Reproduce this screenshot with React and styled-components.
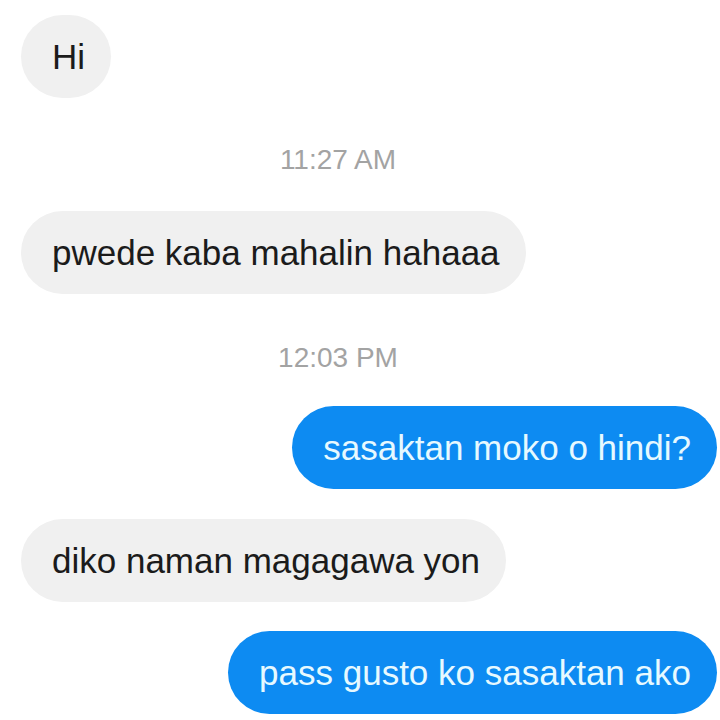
import React from "react";
import styled, { createGlobalStyle } from "styled-components";

const Global = createGlobalStyle`
  html, body { margin: 0; padding: 0; background: #ffffff; }
  body { font-family: "Liberation Sans", Arial, sans-serif; }
`;

const Thread = styled.div`
  width: 720px;
  height: 720px;
  box-sizing: border-box;
  padding: 15px 3px 0 21px;
  display: flex;
  flex-direction: column;
  overflow: hidden;
  background: #ffffff;
`;

const Row = styled.div`
  display: flex;
  justify-content: ${(p) => (p.$mine ? "flex-end" : "flex-start")};
  margin-top: ${(p) => p.$gap || 0}px;
`;

const Bubble = styled.div`
  box-sizing: border-box;
  height: 83px;
  padding: 21px 26px 21px 31px;
  border-radius: 42px;
  font-size: 35px;
  line-height: 41px;
  white-space: nowrap;
  background: ${(p) => (p.$mine ? "#0d8bf2" : "#f0f0f0")};
  color: ${(p) => (p.$mine ? "#e6f9ff" : "#1b1b1b")};
`;

const Stamp = styled.div`
  margin-top: ${(p) => p.$gap}px;
  padding-right: 62px;
  text-align: center;
  font-size: 28px;
  line-height: 32px;
  color: #a3a3a3;
`;

const items = [
  { type: "msg", text: "Hi", gap: 0 },
  { type: "time", text: "11:27 AM", gap: 46 },
  { type: "msg", text: "pwede kaba mahalin hahaaa", gap: 35 },
  { type: "time", text: "12:03 PM", gap: 48 },
  { type: "msg", mine: true, text: "sasaktan moko o hindi?", gap: 32 },
  { type: "msg", text: "diko naman magagawa yon", gap: 30 },
  { type: "msg", mine: true, text: "pass gusto ko sasaktan ako", gap: 29 },
];

export default function App() {
  return (
    <>
      <Global />
      <Thread>
        {items.map((it, i) =>
          it.type === "time" ? (
            <Stamp key={i} $gap={it.gap}>
              {it.text}
            </Stamp>
          ) : (
            <Row key={i} $mine={it.mine} $gap={it.gap}>
              <Bubble $mine={it.mine}>{it.text}</Bubble>
            </Row>
          )
        )}
      </Thread>
    </>
  );
}
